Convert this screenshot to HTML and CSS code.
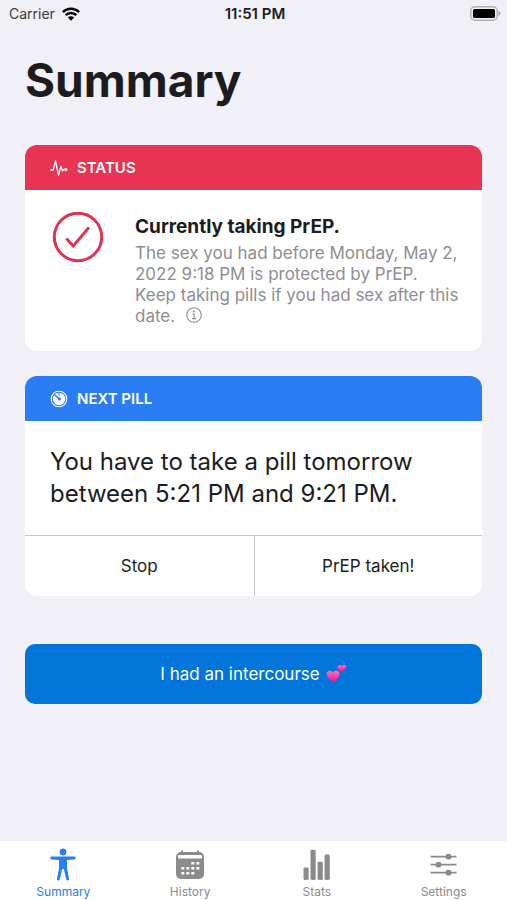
FILE: index.html
```html
<!DOCTYPE html>
<html lang="en">
<head>
<meta charset="utf-8">
<meta name="viewport" content="width=device-width, initial-scale=1">
<title>Summary</title>
<link rel="stylesheet" href="styles.css">
</head>
<body>
<div class="app">
  <header class="status-bar">
    <div class="carrier">
      <span>Carrier</span>
      <svg width="18" height="14" viewBox="0 0 18 14" aria-hidden="true">
        <g fill="none" stroke="#000" stroke-width="2.4">
          <path d="M.8 5.1a11.7 11.7 0 0 1 16.4 0"/>
          <path d="M3.7 8.2a7.5 7.5 0 0 1 10.6 0"/>
        </g>
        <path d="M5.8 10.5a4.6 4.6 0 0 1 6.4 0L9 13.7z" fill="#000"/>
      </svg>
    </div>
    <time class="clock">11:51 PM</time>
    <div class="battery">
      <svg width="31" height="15" viewBox="0 0 31 15" aria-hidden="true">
        <rect x=".8" y=".8" width="26.4" height="13.4" rx="4" fill="none" stroke="#b0b0b4" stroke-width="1.4"/>
        <rect x="3" y="3" width="22" height="9" rx="1.5" fill="#000"/>
        <path d="M28.4 5c2.6.8 2.6 4.2 0 5z" fill="#a4a4a8"/>
      </svg>
    </div>
  </header>

  <main class="content">
    <h1 class="title">Summary</h1>

    <section class="card">
      <h2 class="card-header card-header-red">
        <svg width="18" height="18" viewBox="0 0 18 18" aria-hidden="true">
          <path d="M.8 11h2.4L5.5 2l3 14 2.5-8.5 1.6 4.5 1.1-1.6h2" fill="none" stroke="#fff" stroke-width="1.3" stroke-linejoin="round" stroke-linecap="round"/>
          <circle cx="15.9" cy="10.6" r="1.6" fill="#fff"/>
        </svg>
        <span>STATUS</span>
      </h2>
      <div class="status-body">
        <svg class="status-icon" width="52" height="52" viewBox="0 0 52 52" aria-hidden="true">
          <circle cx="26" cy="26" r="23.7" fill="none" stroke="#e23252" stroke-width="3"/>
          <path d="M14.4 27.6l6.8 7.4L37 16.4" fill="none" stroke="#e23252" stroke-width="3"/>
        </svg>
        <div>
          <h3 class="status-title">Currently taking PrEP.</h3>
          <p class="status-text">The sex you had before Monday, May 2, 2022 9:18 PM is protected by PrEP.<br>Keep taking pills if you had sex after this date.
            <button class="info" type="button" aria-label="More information">
              <svg width="16" height="16" viewBox="0 0 16 16" aria-hidden="true">
                <circle cx="8" cy="8" r="7.3" fill="none" stroke="#8e8e92" stroke-width="1.1"/>
                <circle cx="7.8" cy="4.5" r="1" fill="#8e8e92"/>
                <path d="M6.3 7h1.8v4.4M6 11.6h4.2" fill="none" stroke="#8e8e92" stroke-width="1.1"/>
              </svg>
            </button>
          </p>
        </div>
      </div>
    </section>

    <section class="card">
      <h2 class="card-header card-header-blue">
        <svg width="18" height="18" viewBox="0 0 18 18" aria-hidden="true">
          <circle cx="9" cy="9" r="7.8" fill="none" stroke="#fff" stroke-width="1.1"/>
          <circle cx="9" cy="9" r="6.2" fill="#fff"/>
          <path d="M9 2.5V5.8" stroke="#2b7df3" stroke-width="1"/>
          <path d="M4.8 5l5 4.2" stroke="#2b7df3" stroke-width="1.6" stroke-linecap="round"/>
          <circle cx="9.4" cy="9" r="1.5" fill="#2b7df3"/>
        </svg>
        <span>NEXT PILL</span>
      </h2>
      <p class="pill-text">You have to take a pill tomorrow between 5:21 PM and 9:21 PM.</p>
      <div class="actions">
        <button class="action" type="button">Stop</button>
        <button class="action" type="button">PrEP taken!</button>
      </div>
    </section>

    <button class="primary" type="button">
      <span>I had an intercourse</span>
      <svg width="21" height="20" viewBox="0 0 21 20" aria-hidden="true">
        <defs>
          <linearGradient id="pink" x1="0" y1="0" x2="0" y2="1">
            <stop offset="0" stop-color="#ff75bd"/>
            <stop offset=".5" stop-color="#fb3aa5"/>
            <stop offset="1" stop-color="#de168a"/>
          </linearGradient>
        </defs>
        <path d="M8 19.2C5 16.3.8 14.2.6 10.3.4 6.8 5 5.4 6.8 8.8 8.5 5.3 13.8 6 13.5 10.2 13.2 13.5 9.8 15.6 8 19.2z" fill="url(#pink)"/>
        <path d="M15.5 8.4C14.1 6.5 11.5 5.2 11.6 2.9c.1-2.3 3.2-2.7 4.2-.5C17-.1 20.4.4 20.2 3c-.2 2.3-3.2 3.2-4.7 5.4z" fill="url(#pink)"/>
      </svg>
    </button>
  </main>

  <nav class="tabs">
    <a class="tab tab-active" href="#summary" aria-current="page">
      <svg width="32" height="34" viewBox="0 0 32 34" aria-hidden="true">
        <circle cx="16" cy="4" r="3.4" fill="currentColor"/>
        <path d="M4.7 8.6h22.6a1.4 1.4 0 0 1 0 2.8L20 12.1v8.5l2 10.2c.4 2-2.3 2.4-2.8.5L16.8 21h-1.6l-2.4 10.3c-.5 1.9-3.2 1.5-2.8-.5l2-10.2v-8.5l-7.3-.7a1.4 1.4 0 0 1 0-2.8z" fill="currentColor"/>
      </svg>
      <span>Summary</span>
    </a>
    <a class="tab" href="#history">
      <svg width="32" height="34" viewBox="0 0 32 34" aria-hidden="true">
        <path d="M8 2.5v4M24 2.5v4" stroke="currentColor" stroke-width="2"/>
        <rect x="2" y="4" width="28" height="27" rx="5" fill="currentColor"/>
        <rect x="4" y="7" width="24" height="3.6" rx="1" fill="#fff"/>
        <g fill="#fff">
          <path d="M17.3 14h3v2.6h-3zM22.3 14h3v2.6h-3zM7.3 19h3v2.6h-3zM12.3 19h3v2.6h-3zM17.3 19h3v2.6h-3zM22.3 19h3v2.6h-3zM7.3 24h3v2.6h-3zM12.3 24h3v2.6h-3zM17.3 24h3v2.6h-3z"/>
        </g>
      </svg>
      <span>History</span>
    </a>
    <a class="tab" href="#stats">
      <svg width="32" height="34" viewBox="0 0 32 34" aria-hidden="true">
        <g fill="currentColor">
          <rect x="2.5" y="19.5" width="5.2" height="12.5" rx="1.4"/>
          <rect x="9.5" y="1.8" width="5.2" height="30.2" rx="1.4"/>
          <rect x="16.6" y="13.8" width="5.2" height="18.2" rx="1.4"/>
          <rect x="23.6" y="6.5" width="5.2" height="25.5" rx="1.4"/>
        </g>
      </svg>
      <span>Stats</span>
    </a>
    <a class="tab" href="#settings">
      <svg width="32" height="34" viewBox="0 0 32 34" aria-hidden="true">
        <path d="M2.5 8.7h26M2.5 16.7h26M2.5 24.7h26" stroke="currentColor" stroke-width="1.8"/>
        <g fill="currentColor">
          <circle cx="20.5" cy="8.7" r="2.9"/>
          <circle cx="10.5" cy="16.7" r="2.9"/>
          <circle cx="20.5" cy="24.7" r="2.9"/>
        </g>
      </svg>
      <span>Settings</span>
    </a>
  </nav>
</div>
</body>
</html>
```

FILE: styles.css
```css
* {
  box-sizing: border-box;
}

body {
  margin: 0;
  background: #f1f0f6;
  color: #1c1c1e;
  font-family: Inter, "Liberation Sans", sans-serif;
}

h1, h2, h3, p {
  margin: 0;
}

button {
  border: 0;
  padding: 0;
  background: none;
  color: inherit;
  font: inherit;
  cursor: pointer;
}

svg {
  display: block;
  flex: none;
}

.app {
  display: flex;
  flex-direction: column;
  min-height: 100vh;
}

.status-bar {
  display: grid;
  grid-template-columns: 1fr auto 1fr;
  align-items: center;
  height: 27px;
  padding: 0 6px 0 9px;
  font-size: 14px;
}

.carrier {
  display: flex;
  align-items: center;
  gap: 7px;
  color: #3a3a3c;
}

.clock {
  font-size: 15px;
  font-weight: 600;
}

.battery {
  justify-self: end;
}

.content {
  flex: 1;
  display: flex;
  flex-direction: column;
  padding: 25px 25px;
}

.title {
  margin-bottom: 37px;
  font-size: 46px;
  line-height: 56px;
  font-weight: 700;
}

.card {
  margin-bottom: 25px;
  border-radius: 12px;
  background: #fff;
  overflow: hidden;
}

.card-header {
  display: flex;
  align-items: center;
  gap: 9px;
  height: 45px;
  padding: 0 25px;
  color: #fff;
  font-size: 15px;
  font-weight: 600;
}

.card-header-red {
  background: #e63452;
}

.card-header-blue {
  background: #2b7df3;
}

.status-body {
  display: flex;
  gap: 31px;
  padding: 24px 16px 24px 25px;
}

.status-icon {
  margin-left: 2px;
  margin-top: -3px;
}

.status-title {
  margin-bottom: 4px;
  font-size: 19px;
  line-height: 25px;
  font-weight: 700;
}

.status-text {
  color: #8e8e92;
  font-size: 17px;
  line-height: 21px;
}

.info {
  display: inline-block;
  margin-left: 6px;
  vertical-align: -1px;
}

.pill-text {
  padding: 25px;
  font-size: 24px;
  line-height: 32px;
}

.actions {
  display: grid;
  grid-template-columns: 1fr 1fr;
  border-top: 1px solid #c4c4c6;
}

.action {
  height: 60px;
  font-size: 17px;
}

.action + .action {
  border-left: 1px solid #c4c4c6;
}

.primary {
  display: flex;
  align-items: center;
  justify-content: center;
  gap: 6px;
  height: 60px;
  margin-top: 23px;
  border-radius: 10px;
  background: #0275da;
  color: #fff;
  font-size: 17px;
}

.tabs {
  display: grid;
  grid-template-columns: repeat(4, 1fr);
  height: 59px;
  background: #fff;
}

.tab {
  display: flex;
  flex-direction: column;
  align-items: center;
  gap: 2px;
  padding-top: 7px;
  color: #8b8b8b;
  font-size: 12px;
  line-height: 16px;
  text-decoration: none;
}

.tab-active {
  color: #2b7df3;
}
```
